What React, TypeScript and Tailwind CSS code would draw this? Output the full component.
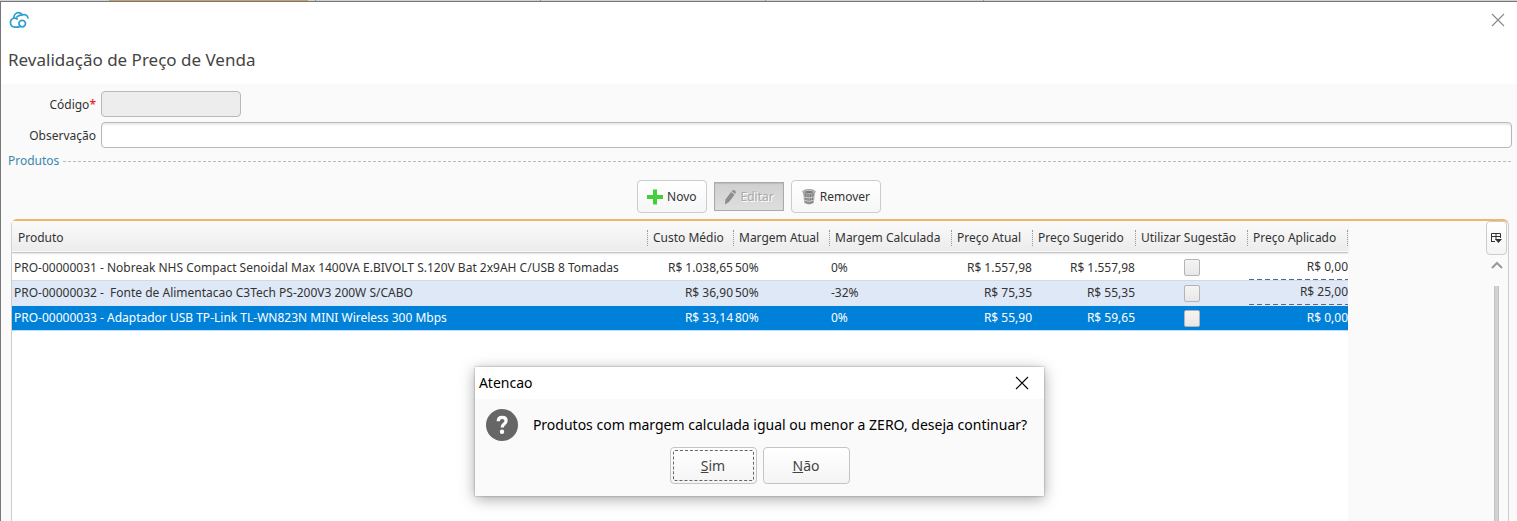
import React from "react";

const rows = [
  {
    name: "PRO-00000031 - Nobreak NHS Compact Senoidal Max 1400VA E.BIVOLT S.120V Bat 2x9AH C/USB 8 Tomadas",
    cost: "R$ 1.038,65",
    margin: "50%",
    calc: "0%",
    price: "R$ 1.557,98",
    suggested: "R$ 1.557,98",
    applied: "R$ 0,00",
    style: "bg-white border-[#d5dae2] text-[#333]",
    editable: true,
  },
  {
    name: "PRO-00000032 -  Fonte de Alimentacao C3Tech PS-200V3 200W S/CABO",
    cost: "R$ 36,90",
    margin: "50%",
    calc: "-32%",
    price: "R$ 75,35",
    suggested: "R$ 55,35",
    applied: "R$ 25,00",
    style: "bg-[#dfe8f6] border-[#dfe8f6] text-[#333]",
    editable: true,
  },
  {
    name: "PRO-00000033 - Adaptador USB TP-Link TL-WN823N MINI Wireless 300 Mbps",
    cost: "R$ 33,14",
    margin: "80%",
    calc: "0%",
    price: "R$ 55,90",
    suggested: "R$ 59,65",
    applied: "R$ 0,00",
    style: "bg-[#0081d9] border-[#b9dffb] text-white",
    editable: false,
  },
];

const columns = [
  { label: "Produto", width: "" },
  { label: "Custo Médio", width: "w-[86px]" },
  { label: "Margem Atual", width: "w-[96px]" },
  { label: "Margem Calculada", width: "w-[122px]" },
  { label: "Preço Atual", width: "w-[81px]" },
  { label: "Preço Sugerido", width: "w-[103px]" },
  { label: "Utilizar Sugestão", width: "w-[112px]" },
  { label: "Preço Aplicado", width: "w-[100px]" },
];

function CloudLogo() {
  return (
    <svg width="21" height="18" viewBox="0 0 21 18" fill="none" stroke="#2f9fd0" strokeWidth="1.7" strokeLinecap="round">
      <path d="M9.8 16.2 H6.6 A4.6 4.6 0 0 1 5.8 7.2 C5.8 4 7.8 1.6 10.6 1.6 C12.4 1.6 13.6 2.4 14.4 3.8 C17 3 19.6 4.2 20 7" />
      <path d="M5.8 7.2 C7.2 7 8.2 7.2 9.2 8 M9 5.8 C10.4 4.4 12.2 3.8 14.4 3.8" />
      <circle cx="14.2" cy="12.6" r="3.3" />
      <path d="M9.8 16.2 C11.2 16.2 11.6 15.6 12 15" />
    </svg>
  );
}

function CloseIcon({ color }: { color: string }) {
  return (
    <svg width="14" height="14" viewBox="0 0 14 14" fill="none" stroke={color} strokeWidth="1.1">
      <path d="M1 1 L13 13 M13 1 L1 13" />
    </svg>
  );
}

function PlusIcon() {
  return (
    <svg width="16" height="16" viewBox="0 0 16 16">
      <path d="M6 0.5 h4 v5.5 h6 v4 h-6 v5.5 h-4 v-5.5 h-6 v-4 h6 z" fill="#3fd03a" />
    </svg>
  );
}

function PencilIcon() {
  return (
    <svg width="13" height="16" viewBox="0 0 14 16" fill="#8d8d8d">
      <path d="M1 16 L1.6 10.6 L7.6 2.6 L11.4 5.6 L5.4 13.4 Z" />
      <path d="M8.3 1.7 Q9.6 -0.4 11.8 1 Q13.8 2.6 12.1 4.7 Z" />
    </svg>
  );
}

function TrashIcon() {
  return (
    <svg width="14" height="16" viewBox="0 0 14 16">
      <path d="M1 3 L2.3 14 Q7 16.8 11.7 14 L13 3 Z" fill="#a6a6a6" />
      <path d="M3.6 5 L4.3 14 M6 5.4 L6.2 14.8 M8.6 5.4 L8.2 14.8 M11 5 L10 14" stroke="#6a6a6a" strokeWidth="0.8" />
      <path d="M2 8 Q7 10 12 8 M2.4 11.3 Q7 13.3 11.6 11.3" stroke="#dcdcdc" strokeWidth="0.8" fill="none" />
      <ellipse cx="7" cy="2.8" rx="6.3" ry="2.2" fill="#c5c5c5" stroke="#8a8a8a" strokeWidth="0.8" />
      <ellipse cx="7" cy="3" rx="4.4" ry="1" fill="#777" />
    </svg>
  );
}

function ColumnsIcon() {
  return (
    <svg width="11" height="11" viewBox="0 0 11 11">
      <path d="M0.5 9 V0.5 H9.5 V5 M0.5 3.5 H9.5 M5 0.5 V7 M0.5 8.5 H4" fill="none" stroke="#333" />
      <path d="M4 6 H11 L7.5 10 Z" fill="#333" />
    </svg>
  );
}

export default function App() {
  return (
    <div className="relative flex min-h-screen flex-col bg-[#fafafa] font-['Noto_Sans',sans-serif] text-xs text-[#333]">
      <div className="flex h-px bg-[#d2d2d2]">
        <div className="w-[109px]" />
        <div className="w-[199px] bg-[#c9a069]" />
        <div className="w-[8px] border-r border-[#999]" />
        <div className="w-[225px] border-r border-[#999]" />
        <div className="w-[225px] border-r border-[#999]" />
        <div className="w-[218px] border-r border-[#999]" />
      </div>
      <div className="flex flex-1 flex-col border-l border-t border-[#777]">
        <header className="h-[82px] bg-white pl-[7px] pr-3">
          <div className="flex h-9 items-center justify-between">
            <CloudLogo />
            <button type="button" aria-label="Fechar" className="flex">
              <CloseIcon color="#888" />
            </button>
          </div>
          <h1 className="pt-2 text-[17px] leading-7 text-[#444]">Revalidação de Preço de Venda</h1>
        </header>

        <main className="flex flex-1 flex-col">
          <form className="flex flex-col gap-[5px] pr-[5px] pt-[7px]">
            <div className="flex items-center gap-[5px]">
              <label htmlFor="codigo" className="w-[95px] pt-0.5 text-right">
                Código<span className="text-red-600">*</span>
              </label>
              <input
                id="codigo"
                disabled
                className="h-[26px] w-[140px] rounded border border-[#b8b8b8] bg-[#ededed]"
              />
            </div>
            <div className="flex items-center gap-[5px]">
              <label htmlFor="observacao" className="w-[95px] pt-0.5 text-right">
                Observação
              </label>
              <input
                id="observacao"
                className="h-[26px] min-w-0 flex-1 rounded border border-[#b8b8b8] bg-white shadow-[inset_0_2px_2px_#eaeaea]"
              />
            </div>
          </form>

          <div className="flex items-center gap-1 pl-[7px] pr-[5px] pt-[5px]">
            <h2 className="leading-4 text-[#3a87ad]">Produtos</h2>
            <div className="h-px flex-1 bg-[repeating-linear-gradient(90deg,#bbb_0_3px,transparent_3px_5px)]" />
          </div>

          <div className="flex items-center justify-center gap-[7px] pt-[11px]">
            <button
              type="button"
              className="flex h-[33px] items-center gap-1 rounded border border-[#ccc] bg-linear-to-b from-white to-[#f6f6f6] px-[9px]"
            >
              <PlusIcon />
              Novo
            </button>
            <button
              type="button"
              disabled
              className="flex h-[29px] items-center gap-1 border border-[#aaa] bg-linear-to-b from-[#d0d0d0] to-[#dedede] px-[9px] text-[#aaa] shadow-[inset_0_1px_1px_#bbb] [text-shadow:1px_1px_0_#fff]"
            >
              <PencilIcon />
              Editar
            </button>
            <button
              type="button"
              className="flex h-[33px] items-center gap-1 rounded border border-[#ccc] bg-linear-to-b from-white to-[#f6f6f6] px-[10px]"
            >
              <TrashIcon />
              Remover
            </button>
          </div>

          <section className="ml-2.5 mr-2 mt-1.5 flex flex-1 rounded-t-md border-x border-t-2 border-x-[#ccc] border-t-[#e9b966]">
            <div className="flex-1 bg-white">
              <table className="w-full table-fixed border-collapse">
                <thead>
                  <tr className="h-[31px] border-b border-[#c4c4c4] bg-linear-to-b from-[#fafafa] to-[#ececec] shadow-[0_2px_2px_#e4e4e4]">
                    {columns.map((c) => (
                      <th key={c.label} className={`p-0 pt-1 text-left font-normal first:pl-px ${c.width}`}>
                        <div className="h-4 border-r border-dotted border-[#999] pl-[5px] leading-4 whitespace-nowrap">
                          {c.label}
                        </div>
                      </th>
                    ))}
                  </tr>
                </thead>
                <tbody className="before:block before:h-[3px] before:content-['']">
                  {rows.map((r) => (
                    <tr key={r.name} className={`h-[25px] border-b whitespace-pre ${r.style}`}>
                      <td className="overflow-hidden p-0 pl-0.5">{r.name}</td>
                      <td className="p-0 pr-px text-right">{r.cost}</td>
                      <td className="p-0 pl-px">{r.margin}</td>
                      <td className="p-0 pl-px">{r.calc}</td>
                      <td className="p-0 pr-px text-right">{r.price}</td>
                      <td className="p-0 pr-px text-right">{r.suggested}</td>
                      <td className="p-0">
                        <input
                          type="checkbox"
                          aria-label={`Utilizar sugestão ${r.name}`}
                          className="mx-auto block h-[17px] w-4 appearance-none rounded-xs border border-[#b4b4b4] bg-linear-to-b from-[#f4f4f4] to-[#e8e8e8]"
                        />
                      </td>
                      <td className="p-0 pl-px text-right">
                        <div
                          className={
                            r.editable
                              ? "h-6 bg-[repeating-linear-gradient(90deg,#4a6a94_0_5px,transparent_5px_8px)] bg-[length:100%_1px] bg-bottom bg-no-repeat leading-[22px]"
                              : "h-6 leading-6"
                          }
                        >
                          {r.applied}
                        </div>
                      </td>
                    </tr>
                  ))}
                </tbody>
              </table>
            </div>
            <div className="w-[138px]" />
            <div className="flex w-[22px] flex-col items-center pr-px">
              <button
                type="button"
                aria-label="Colunas"
                className="flex h-[34px] w-[21px] items-center justify-center rounded border border-[#ccc] bg-linear-to-b from-white to-[#f4f4f4]"
              >
                <ColumnsIcon />
              </button>
              <svg className="mt-1.5" width="12" height="8" viewBox="0 0 12 8" fill="none" stroke="#999" strokeWidth="2">
                <path d="M1 7 L6 2 L11 7" />
              </svg>
              <div className="mt-[17px] w-[5px] flex-1 border-x border-[#c2c2c2] bg-[#d2d2d2]" />
            </div>
          </section>
        </main>
      </div>

      <div className="absolute inset-x-0 top-[367px] flex justify-center pl-0.5">
        <div
          role="dialog"
          aria-labelledby="dialog-title"
          className="bg-[#fafafa] pb-3 text-sm text-black shadow-[0_3px_14px_#00000059,0_0_2px_#00000059]"
        >
          <div className="flex h-8 items-center justify-between bg-white pl-1 pr-[15px]">
            <h2 id="dialog-title">Atencao</h2>
            <button type="button" aria-label="Fechar aviso" className="flex">
              <CloseIcon color="#000" />
            </button>
          </div>
          <div className="flex items-center gap-[15px] pl-[11px] pr-[17px] pt-[10px]">
            <svg width="32" height="32" viewBox="0 0 32 32">
              <circle cx="16" cy="16" r="16" fill="#666" />
              <path
                d="M12.2 12.2 C12.3 9.6 14 8.4 16.2 8.4 C18.6 8.4 20.1 9.8 20.1 11.8 C20.1 13.6 19 14.4 17.9 15.3 C16.7 16.2 16.2 16.8 16.2 18.6"
                fill="none"
                stroke="#fff"
                strokeWidth="3.2"
              />
              <circle cx="16" cy="22.8" r="2.2" fill="#fff" />
            </svg>
            <p>Produtos com margem calculada igual ou menor a ZERO, deseja continuar?</p>
          </div>
          <div className="flex justify-center gap-[6px] pt-[6px] text-[#444]">
            <button
              type="button"
              className="h-[37px] w-[87px] rounded border border-[#c4c4c4] bg-linear-to-b from-white to-[#f4f4f4] p-0.5"
            >
              <span className="flex h-full items-center justify-center rounded-xs border border-dashed border-[#666]">
                <span className="underline">S</span>im
              </span>
            </button>
            <button
              type="button"
              className="h-[37px] w-[87px] rounded border border-[#c4c4c4] bg-linear-to-b from-white to-[#f4f4f4]"
            >
              <span className="underline">N</span>ão
            </button>
          </div>
        </div>
      </div>
    </div>
  );
}
